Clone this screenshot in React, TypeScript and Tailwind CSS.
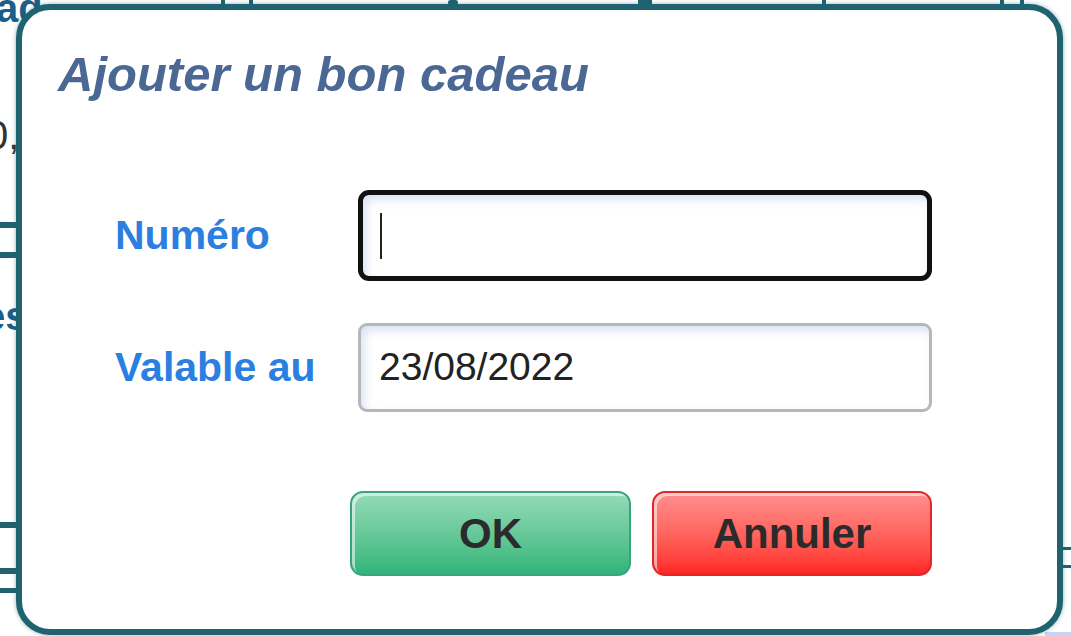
import React from 'react';

const font = { fontFamily: '"Liberation Sans", Arial, sans-serif' };

// the page behind the modal, only its edges show
function Backdrop() {
    return (
        <div className="absolute inset-0 bg-white">
            <div className="absolute left-[-33px] top-[-12px] text-[40px] font-bold text-[#1a5e8a] leading-none">Cad</div>
            <div className="absolute left-[-14px] top-[115px] text-[40px] text-[#333] leading-none">0,</div>
            <div className="absolute left-[-28px] top-[296px] text-[40px] font-bold text-[#1a5e8a] leading-none">les</div>

            <div className="absolute left-0 top-[222px] flex w-[20px] flex-col gap-[24px]">
                <div className="h-[6px] bg-[#1f6270]" />
                <div className="h-[6px] bg-[#1f6270]" />
            </div>
            <div className="absolute left-0 top-[522px] flex w-[20px] flex-col">
                <div className="h-[6px] bg-[#1f6270]" />
                <div className="mt-[40px] h-[6px] bg-[#1f6270]" />
                <div className="mt-[14px] h-[5px] bg-[#1f6270]" />
            </div>

            <div className="absolute left-[221px] right-0 top-0 flex h-[6px] items-start">
                <div className="h-[6px] w-[4px] bg-[#1f6270]" />
                <div className="ml-[24px] h-[6px] w-[4px] bg-[#1f6270]" />
                <div className="ml-[195px] h-[5px] w-[10px] rounded-full bg-[#1f6270]" />
                <div className="ml-[180px] h-[5px] w-[14px] bg-[#1f6270]" />
                <div className="ml-[170px] h-[6px] w-[4px] bg-[#1f6270]" />
                <div className="ml-[174px] h-[6px] w-[4px] bg-[#1f6270]" />
                <div className="ml-[16px] h-[6px] w-[4px] bg-[#1f6270]" />
            </div>

            <div className="absolute right-0 top-[547px] flex w-[14px] flex-col gap-[15px]">
                <div className="h-[3px] bg-[#1f6270]" />
                <div className="h-[3px] bg-[#1f6270]" />
            </div>
            <div className="absolute bottom-0 right-0 h-[4px] w-[26px] bg-[#c9d5f2]" />
        </div>
    );
}

export default function App() {
    return (
        <div className="relative w-[1071px] h-[636px] overflow-hidden" style={font}>
            <Backdrop />

            <div className="absolute left-[16px] top-[4px] w-[1047px] h-[631px] rounded-[34px] border-[6px] border-[#1f6270] bg-white shadow-[0_0_4px_rgba(31,98,112,0.5)]">
                <h1 className="ml-[36px] mt-[40px] text-[49px] leading-none font-bold italic text-[#4a6893]">
                    Ajouter un bon cadeau
                </h1>

                <div className="mt-[91px] ml-[93px] flex flex-col gap-[42px]">
                    <div className="flex items-center">
                        <label className="w-[243px] text-[41px] font-bold text-[#2a7fe0] leading-none">Numéro</label>
                        <div className="relative h-[91px] w-[574px] rounded-[11px] border-[5px] border-[#111] bg-white shadow-[inset_4px_5px_8px_rgba(205,218,240,0.7)]">
                            <span className="absolute left-[17px] top-[18px] h-[46px] w-[2px] bg-[#222]" />
                        </div>
                    </div>
                    <div className="flex items-center">
                        <label className="w-[243px] text-[41px] font-bold text-[#2a7fe0] leading-none">Valable au</label>
                        <div className="flex h-[89px] w-[574px] items-center rounded-[9px] border-[3px] border-[#b7b7b9] bg-white pl-[18px] text-[39px] text-[#222] shadow-[inset_4px_5px_8px_rgba(205,218,240,0.7)]">
                            23/08/2022
                        </div>
                    </div>
                </div>

                <div className="mt-[79px] ml-[328px] flex gap-[21px]">
                    <button className="h-[85px] w-[281px] rounded-[13px] border-2 border-[#3ba37c] bg-gradient-to-b from-[#93dbb8] to-[#2db57a] text-[42px] font-bold text-[#2b2b2b] shadow-[inset_3px_3px_0_rgba(255,255,255,0.55)]">
                        OK
                    </button>
                    <button className="h-[85px] w-[280px] rounded-[13px] border-2 border-[#e32626] bg-gradient-to-b from-[#ff8e8e] to-[#ff2222] text-[42px] font-bold text-[#2b2b2b] shadow-[inset_3px_3px_0_rgba(255,255,255,0.55)]">
                        Annuler
                    </button>
                </div>
            </div>
        </div>
    );
}
